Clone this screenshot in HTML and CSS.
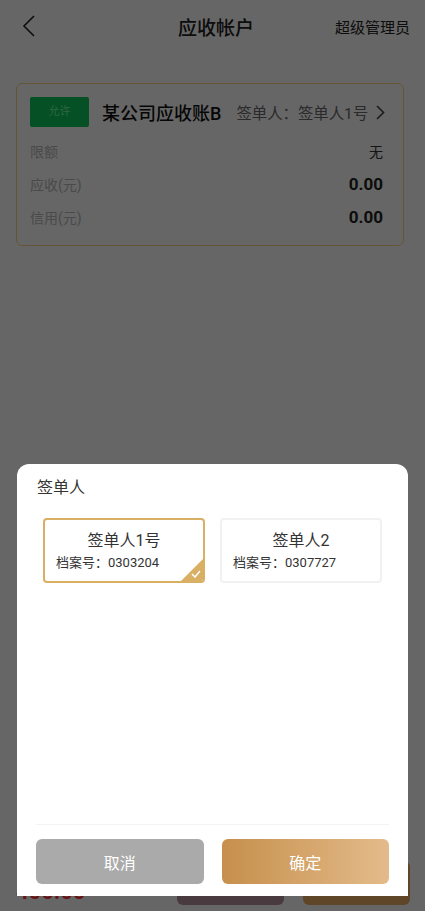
FILE: index.html
```html
<!DOCTYPE html>
<html lang="zh-CN">
<head>
    <meta charset="UTF-8">
    <meta name="viewport" content="width=device-width, initial-scale=1.0">
    <title>应收帐户</title>
    <link rel="stylesheet" href="styles.css">
</head>
<body>
    <div class="header">
        <div class="back">
            <svg width="14" height="22" viewBox="0 0 14 22"><path d="M12 1 L2 11 L12 21" fill="none" stroke="#222" stroke-width="1.6"/></svg>
        </div>
        <div class="title">应收帐户</div>
        <div class="role">超级管理员</div>
    </div>

    <div class="account">
        <div class="account-head">
            <span class="tag">允许</span>
            <span class="account-name">某公司应收账B</span>
            <span class="signer">签单人：签单人1号</span>
            <svg class="arrow" width="9" height="15" viewBox="0 0 9 15"><path d="M1 1 L7.5 7.5 L1 14" fill="none" stroke="#444" stroke-width="1.6"/></svg>
        </div>
        <div class="row"><span class="label">限额</span><span class="value">无</span></div>
        <div class="row"><span class="label">应收(元)</span><span class="value num">0.00</span></div>
        <div class="row"><span class="label">信用(元)</span><span class="value num">0.00</span></div>
    </div>

    <div class="bottom-bar">
        <div class="price">400.00</div>
        <div class="bar-btns">
            <button class="bar-btn dark">挂账</button>
            <button class="bar-btn gold">结账</button>
        </div>
    </div>

    <div class="mask"></div>

    <div class="popup">
        <div class="popup-body">
            <div class="popup-title">签单人</div>
            <div class="options">
                <div class="option active">
                    <div class="opt-name">签单人1号</div>
                    <div class="opt-no">档案号：0303204</div>
                    <span class="corner">
                        <svg width="10" height="8" viewBox="0 0 10 8"><path d="M1 4 L4 7 L9 1" fill="none" stroke="#fff" stroke-width="1.5"/></svg>
                    </span>
                </div>
                <div class="option">
                    <div class="opt-name">签单人2</div>
                    <div class="opt-no">档案号：0307727</div>
                </div>
            </div>
        </div>
        <div class="popup-footer">
            <button class="btn cancel">取消</button>
            <button class="btn confirm">确定</button>
        </div>
    </div>
</body>
</html>
```

FILE: styles.css
```css
body {
    font-family: Roboto, "Noto Sans CJK SC", sans-serif;
    margin: 0;
    padding: 0;
    background-color: #fff;
    color: #333;
    width: 425px;
    height: 911px;
    overflow: hidden;
}
.header {
    height: 52px;
    display: grid;
    grid-template-columns: 1fr auto 1fr;
    align-items: center;
    padding: 0 15px 0 22px;
}
.back svg {
    display: block;
}
.title {
    font-size: 19px;
    font-weight: 500;
    color: #222;
}
.role {
    text-align: right;
    font-size: 15px;
    color: #222;
}
.account {
    margin: 31px 21px 0 16px;
    border: 1.5px solid #ffd582;
    border-radius: 6px;
    padding: 13px 20px 12px 13px;
}
.account-head {
    display: flex;
    align-items: center;
    height: 30px;
    margin-bottom: 7px;
}
.tag {
    width: 59px;
    height: 30px;
    line-height: 30px;
    text-align: center;
    background: #10c85c;
    color: #6fffa8;
    font-size: 11px;
    border-radius: 2px;
}
.account-name {
    margin-left: 13px;
    font-size: 18px;
    font-weight: 500;
    color: #111;
}
.signer {
    margin-left: 15px;
    font-size: 15.4px;
    color: #6a6a6a;
    flex: 1;
}
.arrow {
    margin-right: -2px;
}
.row {
    display: flex;
    justify-content: space-between;
    align-items: center;
    height: 33px;
}
.label {
    font-size: 14px;
    color: #b8b8b8;
}
.value {
    font-size: 14px;
    color: #333;
}
.value.num {
    font-size: 17px;
    font-weight: bold;
    color: #222;
}
.bottom-bar {
    position: fixed;
    left: 0;
    right: 0;
    bottom: 0;
    display: flex;
    justify-content: space-between;
    align-items: flex-end;
    padding: 0 15px 6px 16px;
}
.price {
    font-size: 22px;
    font-weight: bold;
    color: #ff3838;
    line-height: 22px;
    margin-bottom: 2px;
}
.bar-btns {
    display: flex;
    gap: 19px;
}
.bar-btn {
    width: 107px;
    height: 44px;
    border: none;
    border-radius: 6px;
    color: #fff;
    font-size: 16px;
    font-family: inherit;
}
.bar-btn.dark {
    background: #b6929e;
}
.bar-btn.gold {
    background: #eeb068;
}
.mask {
    position: fixed;
    top: 0;
    left: 0;
    right: 0;
    bottom: 0;
    background: rgba(0, 0, 0, 0.6);
}
.popup {
    position: fixed;
    left: 17px;
    right: 17px;
    top: 464px;
    bottom: 15px;
    background: #fff;
    border-radius: 12px 12px 0 0;
    display: flex;
    flex-direction: column;
}
.popup-body {
    flex: 1;
    padding: 14px 20px 0;
}
.popup-title {
    font-size: 16px;
    line-height: 20px;
    color: #333;
}
.options {
    display: grid;
    grid-template-columns: 1fr 1fr;
    gap: 15px;
    margin: 20px 6px 0;
}
.option {
    position: relative;
    height: 65px;
    box-sizing: border-box;
    border: 2px solid #f1f1f1;
    border-radius: 4px;
    padding: 10px 11px 0;
    overflow: hidden;
}
.option.active {
    border-color: #d9b063;
}
.opt-name {
    text-align: center;
    font-size: 16px;
    line-height: 22px;
    color: #333;
}
.opt-no {
    margin-top: 2px;
    font-size: 13px;
    line-height: 18px;
    color: #333;
}
.corner {
    position: absolute;
    right: 0;
    bottom: 0;
    width: 22px;
    height: 22px;
    background: #d9b063;
    clip-path: polygon(100% 0, 100% 100%, 0 100%);
}
.corner svg {
    position: absolute;
    right: 2px;
    bottom: 3px;
}
.popup-footer {
    display: flex;
    gap: 18px;
    margin: 0 19px;
    padding: 14px 0 12px;
    border-top: 1px solid #f3f3f3;
}
.btn {
    flex: 1;
    height: 45px;
    border: none;
    border-radius: 6px;
    color: #fff;
    font-size: 16px;
    font-family: inherit;
}
.cancel {
    background: #aaa;
}
.confirm {
    background: linear-gradient(to right, #c68f4c, #e3bb8a);
}
```
